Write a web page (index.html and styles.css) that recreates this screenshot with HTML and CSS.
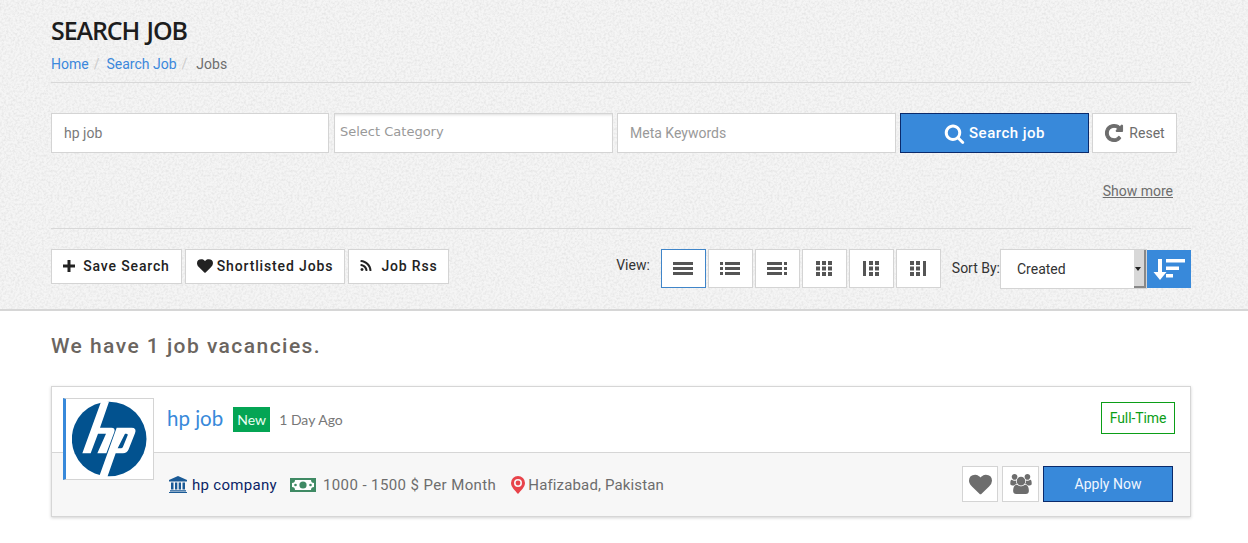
FILE: index.html
```html
<!DOCTYPE html>
<html lang="en">
<head>
<meta charset="utf-8">
<title>Search Job</title>
<link rel="stylesheet" href="styles.css">
</head>
<body>
<header class="band">
  <div class="wrap">
    <h1 class="title">SEARCH JOB</h1>
    <nav class="crumbs"><a href="#">Home</a><i>/</i><a href="#">Search Job</a><i>/</i><span>Jobs</span></nav>
    <form class="search">
      <div class="field f1">hp job</div>
      <div class="field f2">Select Category</div>
      <div class="field f3">Meta Keywords</div>
      <button class="go" type="button"><svg width="21" height="21" viewBox="0 0 1792 1792"><path fill="#fff" d="M1216 832q0-185-131.500-316.500t-316.500-131.500-316.500 131.500-131.500 316.500 131.500 316.500 316.500 131.500 316.500-131.500 131.500-316.500zm512 832q0 52-38 90t-90 38q-54 0-90-38l-343-342q-179 124-399 124-143 0-273.500-55.500t-225-150-150-225-55.500-273.500 55.500-273.500 150-225 225-150 273.500-55.500 273.500 55.500 225 150 150 225 55.500 273.500q0 220-124 399l343 343q37 37 37 90z"/></svg>Search job</button>
      <button class="reset" type="button"><svg width="20" height="20" viewBox="0 0 1792 1792"><path fill="#6d6d6d" stroke="#6d6d6d" stroke-width="90" d="M1664 256v448q0 26-19 45t-45 19h-448q-42 0-59-40-17-39 14-69l138-138q-148-137-349-137-104 0-198.500 40.500t-163.500 109.500-109.500 163.500-40.500 198.500 40.500 198.500 109.500 163.500 163.500 109.500 198.500 40.500q119 0 225-52t179-147q7-10 23-12 15 0 25 9l137 138q9 8 9.500 20.500t-7.500 22.500q-109 132-264 204.500t-327 72.500q-156 0-298-61t-245-164-164-245-61-298 61-298 164-245 245-164 298-61q147 0 284.500 55.500t244.500 156.500l130-129q29-31 70-14 39 17 39 59z"/></svg>Reset</button>
    </form>
    <div class="more"><a href="#">Show more</a></div>
    <div class="tools">
      <div class="actions">
        <a class="act a1" href="#"><svg width="12" height="12" viewBox="0 0 12 12"><path d="M4.500 0h3v4.500H12v3H7.500V12h-3V7.500H0v-3h4.500z" fill="#222"/></svg>Save Search</a>
        <a class="act a2" href="#"><svg width="16" height="16" viewBox="0 0 1792 1792"><path fill="#222" d="M896 1664q-26 0-44-18l-624-602q-10-8-27.500-26t-55.500-65.500-68-97.500-53.500-121-23.500-138q0-220 127-344t351-124q62 0 126.500 21.500t120 58 95.500 68.500 76 68q36-36 76-68t95.500-68.500 120-58 126.500-21.500q224 0 351 124t127 344q0 221-229 450l-623 600q-18 18-44 18z"/></svg>Shortlisted Jobs</a>
        <a class="act a3" href="#"><svg width="14" height="14" viewBox="0 0 1792 1792"><path fill="#222" d="M576 1344q0 80-56 136t-136 56-136-56-56-136 56-136 136-56 136 56 56 136zm512 123q2 28-17 48-18 21-47 21h-135q-25 0-43-16.500t-20-41.500q-22-229-184.500-391.500t-391.500-184.500q-25-2-41.500-20t-16.500-43v-135q0-29 21-47 17-17 43-17h5q160 13 306 80.500t259 181.500q114 113 181.500 259t80.500 306zm512 2q2 27-18 47-18 20-46 20h-143q-26 0-44.500-17.500t-19.500-42.500q-12-215-101-408.500t-231.500-336-336-231.500-408.500-102q-25-1-42.500-19.500t-17.500-43.500v-143q0-28 20-46 18-18 44-18h3q262 13 501.500 120t425.500 294q187 186 294 425.500t120 501.500z"/></svg>Job Rss</a>
      </div>
      <div class="views">
        <span class="lbl view-lbl">View:</span>
        <button class="v on" type="button"><svg width="20" height="13" viewBox="0 0 20 13"><path d="M0 0h20v3H0zM0 5h20v3H0zM0 10h20v3H0z" fill="#555"/></svg></button>
        <button class="v" type="button"><svg width="20" height="13" viewBox="0 0 20 13"><path d="M0 0h3v3H0zM5 0h15v3H5zM0 5h3v3H0zM5 5h15v3H5zM0 10h3v3H0zM5 10h15v3H5z" fill="#555"/></svg></button>
        <button class="v" type="button"><svg width="20" height="13" viewBox="0 0 20 13"><path d="M0 0h15v3H0zM17 0h3v3h-3zM0 5h15v3H0zM17 5h3v3h-3zM0 10h15v3H0zM17 10h3v3h-3z" fill="#555"/></svg></button>
        <button class="v" type="button"><svg width="16" height="15" viewBox="0 0 16 15"><path d="M0 0h4v4H0zM6 0h4v4H6zM12 0h4v4h-4zM0 5.500h4v4H0zM6 5.500h4v4H6zM12 5.500h4v4h-4zM0 11h4v4H0zM6 11h4v4H6zM12 11h4v4h-4z" fill="#555"/></svg></button>
        <button class="v" type="button"><svg width="16" height="15" viewBox="0 0 16 15"><path d="M0 0h3v15H0zM6 0h4v4H6zM12 0h4v4h-4zM6 5.500h4v4H6zM12 5.500h4v4h-4zM6 11h4v4H6zM12 11h4v4h-4z" fill="#555"/></svg></button>
        <button class="v" type="button"><svg width="16" height="15" viewBox="0 0 16 15"><path d="M13 0h3v15h-3zM0 0h4v4H0zM6 0h4v4H6zM0 5.500h4v4H0zM6 5.500h4v4H6zM0 11h4v4H0zM6 11h4v4H6z" fill="#555"/></svg></button>
        <span class="lbl sort-lbl">Sort By:</span>
        <div class="sel"><span>Created</span><b class="arrow"></b></div>
        <button class="dir" type="button"><svg width="32" height="21" viewBox="0 0 32 21"><path d="M5 0h4v13h4.500L7 21 .5 13H5z" fill="#fff"/><path d="M13 0h19v3.500H13zM13 7.500h13V11H13zM13 15h7v3.500h-7z" fill="#fff"/></svg></button>
      </div>
    </div>
  </div>
</header>
<main class="wrap">
  <h2 class="count">We have 1 job vacancies.</h2>
  <article class="card">
    <div class="logo"><svg width="75" height="76" viewBox="37 15 225 228"><circle cx="148.500" cy="129" r="112" fill="#02528f"/><path fill="#fff" d="M124 17H148L121 95H155Q168 95 164 108L140 172H113L139 113H115L93 172H68Z"/><path fill="#fff" fill-rule="evenodd" d="M171 95H216Q232 95 226 112L207 160Q202 172 190 172H168L143 243H118ZM196 113L174 157H184Q188 157 190 152L204 118Q206 113 200 113Z"/></svg></div>
    <div class="top">
      <a class="job" href="#">hp job</a>
      <span class="new">New</span>
      <span class="ago">1 Day Ago</span>
      <span class="type">Full-Time</span>
    </div>
    <div class="bottom">
      <span class="meta company"><svg width="18" height="17" viewBox="0 0 18 17"><path d="M9 0l9 4v1.500H0V4zM2 6.500h2.500v7H2zM6 6.500h2.300v7H6zM9.700 6.500H12v7H9.700zM13.500 6.500H16v7h-2.500zM1 14.300h16V15.500H1zM0 16h18v1H0z" fill="#1a5a96"/></svg>hp company</span>
      <span class="meta pay"><svg width="26" height="14" viewBox="0 0 26 14"><path d="M0 0h26v14H0z" fill="#3f8a64"/><path d="M5 2h16a3 3 0 0 0 3 3v4a3 3 0 0 0-3 3H5a3 3 0 0 0-3-3V5a3 3 0 0 0 3-3z" fill="#fff"/><circle cx="13" cy="7" r="3.600" fill="#3f8a64"/><circle cx="5.500" cy="7" r="1.300" fill="#3f8a64"/><circle cx="20.500" cy="7" r="1.300" fill="#3f8a64"/></svg>1000 - 1500 $ Per Month</span>
      <span class="meta place"><svg width="14" height="18" viewBox="0 0 14 18"><path fill-rule="evenodd" d="M7 0a7 7 0 0 1 7 7c0 4-4 7.500-7 11C4 14.500 0 11 0 7a7 7 0 0 1 7-7zm0 3a4 4 0 1 0 0 8 4 4 0 0 0 0-8z" fill="#e8434a"/><circle cx="7" cy="7" r="2.400" fill="#e8434a"/></svg>Hafizabad, Pakistan</span>
      <div class="btns">
        <button class="sq s1" type="button"><svg width="23" height="23" viewBox="0 0 1792 1792"><path fill="#6d6d6d" d="M896 1664q-26 0-44-18l-624-602q-10-8-27.500-26t-55.500-65.500-68-97.500-53.500-121-23.500-138q0-220 127-344t351-124q62 0 126.500 21.500t120 58 95.500 68.500 76 68q36-36 76-68t95.500-68.500 120-58 126.500-21.500q224 0 351 124t127 344q0 221-229 450l-623 600q-18 18-44 18z"/></svg></button>
        <button class="sq s2" type="button"><svg width="22" height="20" viewBox="0 0 1920 1792"><path fill="#6d6d6d" d="M593 896q-162 5-265 128h-134q-82 0-138-40.500t-56-118.500q0-353 124-353 6 0 43.500 21t97.500 42.500 119 21.500q67 0 133-23-5 37-5 66 0 139 81 256zm1071 637q0 120-73 189.500t-194 69.500h-874q-121 0-194-69.500t-73-189.500q0-53 3.500-103.500t14-109 26.500-108.500 43-97.500 62-81 85.500-53.500 111.500-20q10 0 43 21.500t73 48 107 48 135 21.500 135-21.500 107-48 73-48 43-21.500q61 0 111.500 20t85.500 53.500 62 81 43 97.500 26.500 108.500 14 109 3.500 103.500zm-1024-1277q0 106-75 181t-181 75-181-75-75-181 75-181 181-75 181 75 75 181zm704 384q0 159-112.500 271.500t-271.500 112.500-271.500-112.500-112.500-271.500 112.500-271.500 271.500-112.500 271.500 112.500 112.500 271.500zm576 225q0 78-56 118.500t-138 40.500h-134q-103-123-265-128 81-117 81-256 0-29-5-66 66 23 133 23 59 0 119-21.500t97.500-42.500 43.500-21q124 0 124 353zm-128-609q0 106-75 181t-181 75-181-75-75-181 75-181 181-75 181 75 75 181z"/></svg></button>
        <button class="apply" type="button">Apply Now</button>
      </div>
    </div>
  </article>
</main>
</body>
</html>
```
FILE: styles.css
```css
* { box-sizing: border-box; }
html, body { margin: 0; padding: 0; }
body {
  font-family: Roboto, sans-serif;
  font-size: 14px;
  background: #fff;
  color: #333;
  height: 543px;
  overflow: hidden;
}
a { text-decoration: none; }
button { font-family: inherit; cursor: pointer; padding: 0; }
.wrap { width: 1140px; margin-left: 51px; }
.band {
  height: 311px;
  border-bottom: 2px solid #d6d6d6;
  background-color: #f5f5f5;
  background-image: url("data:image/svg+xml,%3Csvg xmlns='http://www.w3.org/2000/svg' width='240' height='240'%3E%3Cfilter id='m'%3E%3CfeTurbulence type='fractalNoise' baseFrequency='.45' numOctaves='2' stitchTiles='stitch'/%3E%3CfeColorMatrix values='0 0 0 0 .6 0 0 0 0 .6 0 0 0 0 .6 .8 0 0 0 -.3'/%3E%3C/filter%3E%3Crect width='240' height='240' filter='url(%23m)'/%3E%3C/svg%3E");
  overflow: hidden;
}
.title {
  margin: 0;
  padding-top: 14px;
  font-family: "Open Sans", sans-serif;
  font-size: 25px;
  line-height: 33px;
  font-weight: 600;
  color: #1d1d1d;
  letter-spacing: -1.1px;
  word-spacing: 2px;
}
.crumbs {
  margin-top: 8px;
  height: 28px;
  line-height: 18px;
  color: #6d6d6d;
  border-bottom: 1px solid #d8d8d8;
}
.crumbs a { color: #3b88dc; }
.crumbs i { font-style: normal; color: #ccc; margin: 0 7px 0 5px; }
.crumbs i + span { margin-left: 2px; }
.search { display: flex; margin-top: 30px; height: 40px; }
.field {
  height: 40px;
  background: #fff;
  border: 1px solid #d4d4d4;
  line-height: 38px;
  font-size: 14px;
  color: #7a7a7a;
}
.f1 { width: 278px; padding-left: 12px; }
.f2 {
  width: 279px;
  margin-left: 5px;
  padding-left: 5px;
  font-family: "DejaVu Sans", sans-serif;
  font-size: 13px;
  line-height: 36px;
  color: #999;
  box-shadow: inset 0 3px 3px -2px #ddd;
}
.f3 { width: 279px; margin-left: 4px; padding-left: 12px; color: #999; }
.go {
  width: 189px;
  margin-left: 4px;
  height: 40px;
  background: #3889da;
  border: 1px solid #0a2a6b;
  color: #fff;
  font-weight: 500;
  font-size: 15px;
  letter-spacing: .5px;
  display: flex;
  align-items: center;
  justify-content: center;
  gap: 4px;
}
.reset {
  width: 85px;
  margin-left: 3px;
  height: 40px;
  background: #fff;
  border: 1px solid #d4d4d4;
  color: #6d6d6d;
  font-size: 14px;
  display: flex;
  align-items: center;
  justify-content: center;
  gap: 5px;
}
.more { margin-top: 29px; padding-right: 18px; text-align: right; height: 47px; line-height: 18px; border-bottom: 1px solid #d8d8d8; }
.more a { color: #6d6d6d; text-decoration: underline; }
.tools { display: flex; justify-content: space-between; margin-top: 20px; }
.actions { display: flex; gap: 3px; }
.act {
  height: 35px;
  padding-bottom: 2px;
  background: #fff;
  border: 1px solid #d4d4d4;
  display: flex;
  align-items: center;
  justify-content: center;
  color: #222;
  font-weight: 500;
  font-size: 14px;
  letter-spacing: .85px;
}
.a1 { width: 131px; gap: 8px; }
.a2 { width: 160px; gap: 4px; }
.a3 { width: 101px; gap: 8px; }
.views { display: flex; align-items: flex-start; }
.lbl { color: #333; font-size: 14px; line-height: 32px; }
.view-lbl { margin-right: 11px; }
.v {
  width: 45px;
  height: 39px;
  margin-right: 2px;
  background: #fff;
  border: 1px solid #d4d4d4;
  display: flex;
  align-items: center;
  justify-content: center;
}
.v.on { border-color: #3f85c9; }
.sort-lbl { margin-left: 9px; line-height: 38px; }
.sel {
  width: 147px;
  height: 40px;
  background: #fff;
  border: 1px solid #d4d4d4;
  padding-left: 16px;
  line-height: 38px;
  color: #333;
  position: relative;
}
.arrow {
  position: absolute;
  right: 0;
  top: 0;
  bottom: 0;
  width: 12px;
  background: #d8d8d8;
  border-right: 2px solid #888;
  border-bottom: 2px solid #888;
}
.arrow::after {
  content: "";
  position: absolute;
  left: 1px;
  top: 17px;
  border: 3px solid transparent;
  border-top: 4px solid #222;
  border-bottom: 0;
}
.dir {
  width: 44px;
  height: 38px;
  margin-top: 1px;
  background: #3889da;
  border: 0;
  display: flex;
  align-items: center;
  justify-content: center;
}
.count {
  margin: 23px 0 0;
  font-size: 21px;
  line-height: 25px;
  font-weight: 500;
  letter-spacing: 1.45px;
  color: #6b6560;
}
.card {
  position: relative;
  margin-top: 27px;
  height: 131px;
  border: 1px solid #d6d6d6;
  box-shadow: 0 1px 3px rgba(0,0,0,.18);
}
.logo {
  position: absolute;
  left: 11px;
  top: 11px;
  width: 91px;
  height: 82px;
  background: #fff;
  border: 1px solid #d4d4d4;
  border-left: 3px solid #3889da;
  display: flex;
  align-items: center;
  padding-left: 6px;
}
.top {
  height: 66px;
  display: flex;
  align-items: center;
  padding: 0 15px 0 115px;
  border-bottom: 1px solid #d6d6d6;
}
.job { margin-bottom: 4px; font-family: Lato, sans-serif; font-size: 20.5px; color: #3889da; }
.new {
  margin-left: 10px;
  width: 37px;
  height: 25px;
  background: #04a554;
  color: #eafff2;
  font-family: Lato, sans-serif;
  font-size: 14px;
  line-height: 25px;
  text-align: center;
}
.ago { margin-left: 9px; font-family: Lato, sans-serif; font-size: 14px; color: #777; }
.type {
  margin-left: auto;
  margin-bottom: 4px;
  width: 74px;
  height: 32px;
  border: 1px solid #0b9e17;
  color: #0b9e17;
  line-height: 30px;
  text-align: center;
  font-size: 14px;
  letter-spacing: -.1px;
}
.bottom {
  height: 63px;
  background: #f7f7f7;
  display: flex;
  align-items: center;
  padding: 0 17px 0 117px;
}
.meta { display: flex; align-items: center; font-size: 15px; color: #6d6d6d; letter-spacing: .4px; }
.company { color: #0a1f66; gap: 5px; letter-spacing: .3px; }
.pay { margin-left: 13px; gap: 7px; }
.place { margin-left: 15px; gap: 3px; letter-spacing: .15px; }
.btns { margin-left: auto; margin-bottom: 1px; display: flex; }
.sq {
  height: 36px;
  background: #fff;
  border: 1px solid #d4d4d4;
  display: flex;
  align-items: center;
  justify-content: center;
}
.s1 { width: 36px; }
.s2 { width: 37px; margin-left: 4px; }
.apply {
  width: 130px;
  height: 36px;
  margin-left: 4px;
  background: #3889da;
  border: 1px solid #0a2a6b;
  color: #f0f6ff;
  font-size: 14px;
}
```
